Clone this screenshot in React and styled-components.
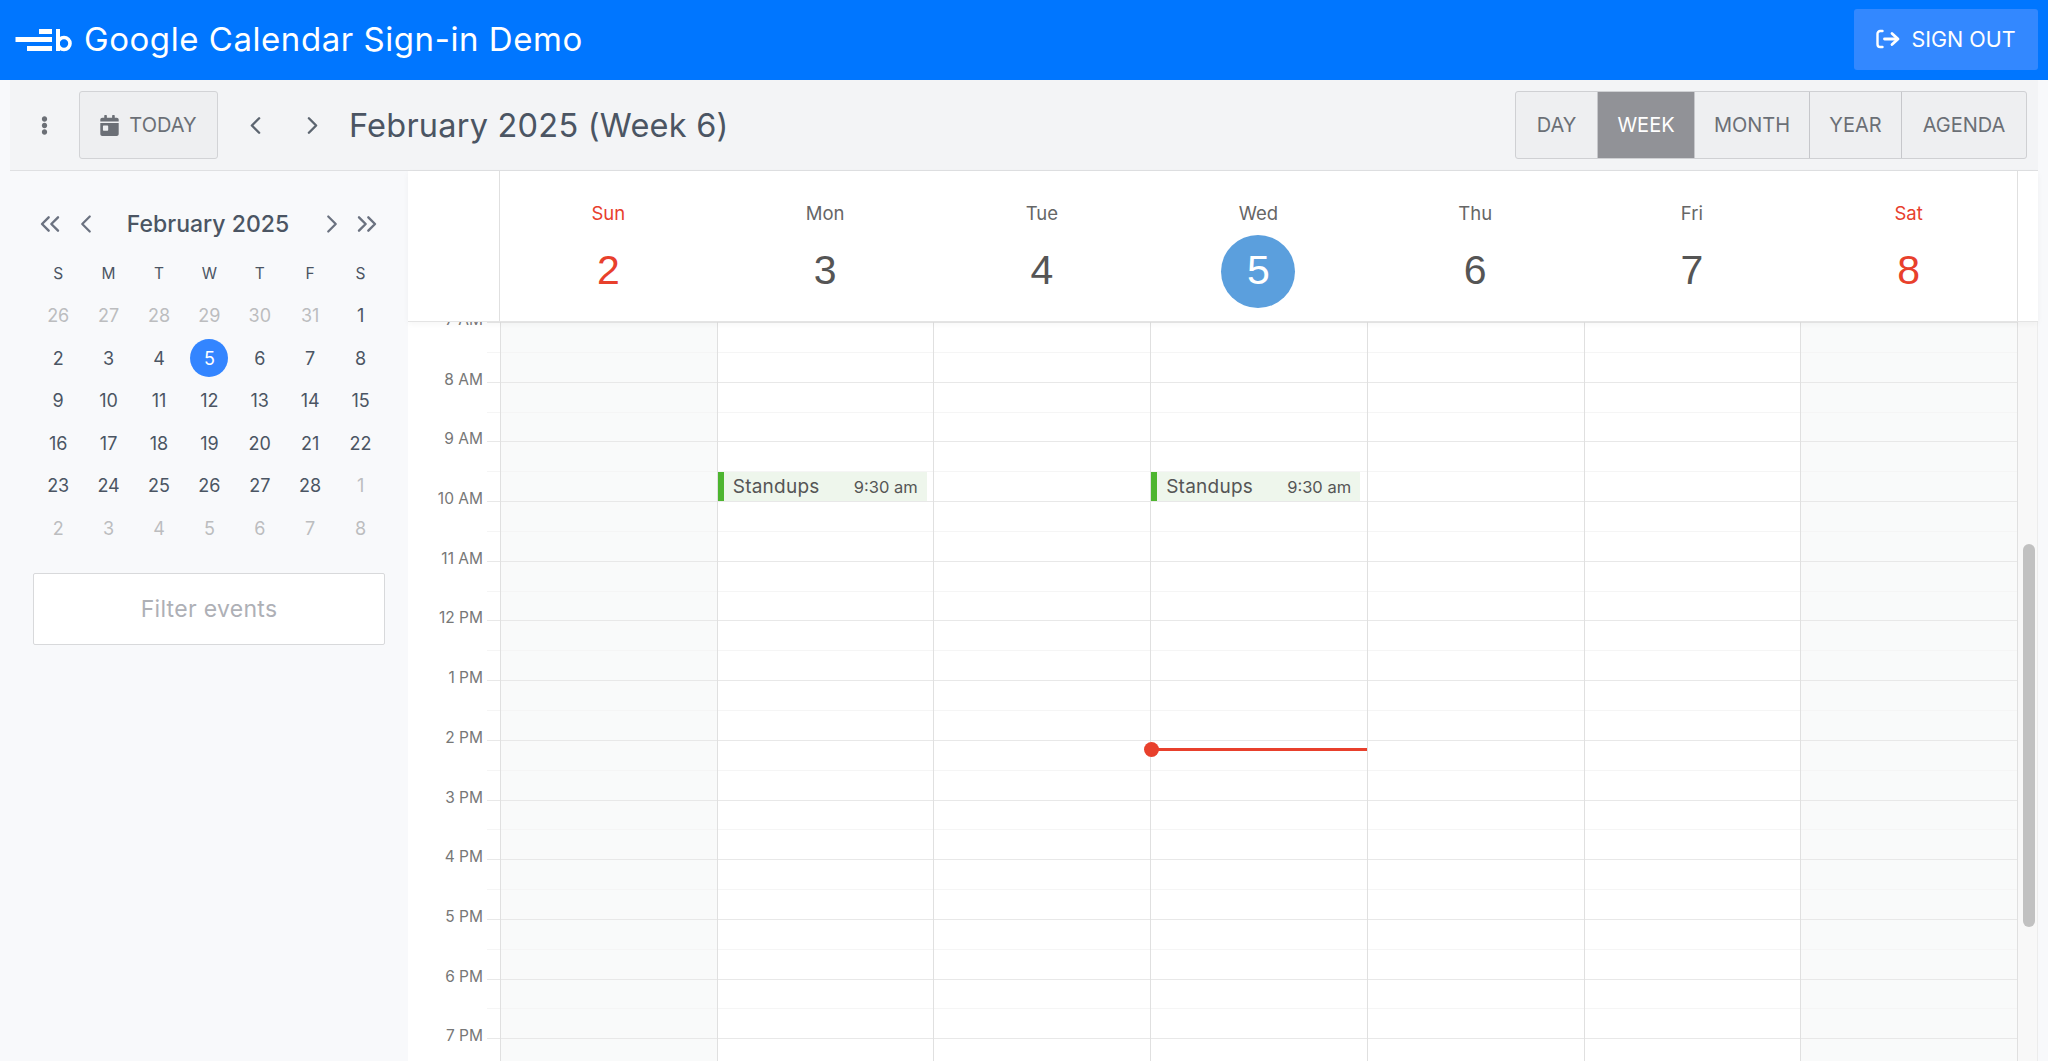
import React from "react";
import styled, { createGlobalStyle } from "styled-components";
import { FaCalendarDay, FaEllipsisV } from "react-icons/fa";
import { ChevronLeft, ChevronRight, ChevronsLeft, ChevronsRight } from "lucide-react";

const Global = createGlobalStyle`
  html, body { margin: 0; padding: 0; background: #f8f9fb; overflow: hidden; }
  * { box-sizing: border-box; }
  body { font-family: Inter, "Noto Sans", sans-serif; }
`;

const Page = styled.div`
  height: 1061px;
  width: 2048px;
  display: flex;
  flex-direction: column;
  overflow: hidden;
`;
const Header = styled.header`
  height: 80px;
  flex: none;
  background: #0076ff;
  display: flex;
  align-items: center;
  justify-content: space-between;
  padding: 0 10px 0 15px;
`;
const Brand = styled.div`
  display: flex;
  align-items: center;
  gap: 11px;
  color: #fff;
  font-size: 33px;
  letter-spacing: 0.55px;
`;
const BrandName = styled.span`
  margin-top: -2px;
`;
const SignOut = styled.button`
  width: 184px;
  height: 61px;
  margin-top: -2px;
  border: 0;
  border-radius: 3px;
  background: #3388ff;
  color: #fff;
  font: 400 21.5px Inter, sans-serif;
  display: flex;
  align-items: center;
  justify-content: center;
  gap: 11px;
  svg { width: 24px; height: 20px; flex: none; }
`;
const Main = styled.div`
  flex: 1;
  min-height: 0;
  margin: 0 10px;
  display: flex;
  flex-direction: column;
`;
const Toolbar = styled.div`
  height: 91px;
  flex: none;
  background: #f3f4f6;
  border-bottom: 1px solid #dfe0e2;
  display: flex;
  align-items: center;
  padding: 0 11px 0 0;
`;
const MenuDots = styled.div`
  width: 69px;
  display: flex;
  justify-content: center;
  color: #6b6f76;
  svg { width: 19px; height: 19px; }
`;
const TodayButton = styled.button`
  width: 139px;
  height: 68px;
  border: 1px solid #d2d3d6;
  border-radius: 3px;
  background: #eeeff1;
  color: #6b6f76;
  font: 400 20px Inter, sans-serif;
  display: flex;
  align-items: center;
  justify-content: center;
  gap: 10px;
  svg { width: 19px; height: 21px; flex: none; }
`;
const NavButton = styled.span`
  width: 57px;
  display: flex;
  justify-content: center;
  color: #5c6570;
  svg { width: 29px; height: 29px; stroke-width: 2; }
`;
const NavGroup = styled.div`
  display: flex;
  margin-left: 9px;
`;
const Title = styled.h1`
  margin: 0 0 0 8px;
  font-size: 32.5px;
  font-weight: 400;
  letter-spacing: 0.22px;
  color: #4b5563;
  flex: 1;
`;
const ViewGroup = styled.div`
  display: flex;
  height: 68px;
  border: 1px solid #cfd0d3;
  border-radius: 3px;
  background: #eeeff1;
`;
const ViewButton = styled.div`
  width: ${(p) => p.$w}px;
  display: flex;
  align-items: center;
  justify-content: center;
  font-size: 20px;
  color: ${(p) => (p.$active ? "#fff" : "#6b6f76")};
  background: ${(p) => (p.$active ? "#919297" : "transparent")};
  border-right: 1px solid #c6c7cb;
  &:last-child { border-right: 0; }
`;
const Body = styled.div`
  flex: 1;
  min-height: 0;
  display: flex;
`;
const Sidebar = styled.aside`
  width: 398px;
  flex: none;
  background: #f8f9fb;
  display: flex;
  flex-direction: column;
  padding: 0 23px;
`;
const MiniHead = styled.div`
  height: 38px;
  margin-top: 34px;
  display: flex;
  align-items: center;
  color: #6b7280;
`;
const MiniNav = styled.span`
  width: ${(p) => p.$w}px;
  flex: none;
  display: flex;
  justify-content: center;
  svg { width: ${(p) => p.$s}px; height: ${(p) => p.$s}px; stroke-width: 1.8; }
`;
const MiniTitle = styled.div`
  flex: 1;
  text-align: center;
  font-size: 23px;
  font-weight: 500;
  color: #4b5563;
  margin-right: 4px;
`;
const MiniGrid = styled.div`
  display: grid;
  grid-template-columns: repeat(7, 50.4px);
  grid-auto-rows: 42.5px;
  margin-top: 9px;
`;
const MiniCell = styled.div`
  display: flex;
  align-items: center;
  justify-content: center;
  font-size: ${(p) => (p.$head ? 15.5 : 18)}px;
  color: ${(p) => (p.$muted ? "#bcbdbf" : "#4b5563")};
`;
const TodayDot = styled.span`
  width: 38px;
  height: 38px;
  border-radius: 50%;
  background: #3385ff;
  color: #fff;
  display: flex;
  align-items: center;
  justify-content: center;
`;
const Filter = styled.div`
  width: 352px;
  height: 72px;
  margin-top: 23px;
  background: #fff;
  border: 1px solid #d8d9db;
  border-radius: 2px;
  display: flex;
  align-items: center;
  justify-content: center;
  font-size: 23px;
  letter-spacing: 0.3px;
  color: #aeb0b6;
`;
const Calendar = styled.div`
  flex: 1;
  min-width: 0;
  background: #fff;
  display: flex;
  flex-direction: column;
`;
const DayHeader = styled.div`
  height: 151px;
  flex: none;
  display: grid;
  grid-template-columns: 92px repeat(7, 1fr) 21px;
  border-bottom: 1px solid #e4e4e4;
  box-shadow: 0 2px 6px rgba(0, 0, 0, 0.04);
  position: relative;
  z-index: 1;
`;
const HeadSpacer = styled.div`
  border-right: 1px solid #e0e0e0;
`;
const HeadEnd = styled.div`
  border-left: 1px solid #e0e0e0;
`;
const HeadDay = styled.div`
  display: flex;
  flex-direction: column;
  align-items: center;
  padding-top: 30px;
`;
const HeadName = styled.div`
  font-size: 18.5px;
  line-height: 24px;
  color: ${(p) => (p.$weekend ? "#e8402c" : "#666")};
`;
const HeadNumber = styled.div`
  width: 74px;
  height: 73px;
  margin-top: 10px;
  padding-bottom: 2px;
  border-radius: 50%;
  display: flex;
  align-items: center;
  justify-content: center;
  font: 400 41px "Liberation Sans", Arial, sans-serif;
  color: ${(p) => (p.$today ? "#fff" : p.$weekend ? "#e8402c" : "#555")};
  background: ${(p) => (p.$today ? "#5b9fdd" : "transparent")};
`;
const TimeGrid = styled.div`
  flex: 1;
  min-height: 0;
  overflow: hidden;
  display: grid;
  grid-template-columns: 92px repeat(7, 1fr) 21px;
`;
const Gutter = styled.div`
  display: flex;
  flex-direction: column;
`;
const GutterSlot = styled.div`
  height: 29.85px;
  flex: none;
  display: grid;
  grid-template-columns: 75px 4px 13px;
`;
const GutterLabel = styled.div`
  font-size: 15.5px;
  line-height: 20px;
  height: 20px;
  margin-top: -12px;
  text-align: right;
  color: #777;
  white-space: nowrap;
`;
const GutterTick = styled.div`
  grid-column: 3;
  border-top: 1px solid ${(p) => (p.$hour ? "#e8e8e8" : "#f5f5f5")};
`;
const DayColumn = styled.div`
  position: relative;
  border-left: 1px solid #e0e0e0;
  background: ${(p) => (p.$weekend ? "#f9fafa" : "#fff")};
  display: flex;
  flex-direction: column;
`;
const Slot = styled.div`
  height: 29.85px;
  flex: none;
  border-top: 1px solid ${(p) => (p.$hour ? "#e8e8e8" : "#f5f5f5")};
`;
const Event = styled.div`
  position: absolute;
  top: 150px;
  left: 0;
  width: 209px;
  height: 29px;
  background: #eef6ec;
  border-left: 6px solid #4db52f;
  display: flex;
  align-items: center;
  justify-content: space-between;
  padding: 0 9px 0 9px;
  color: #555;
`;
const EventName = styled.span`
  font-size: 19px;
  letter-spacing: 0.25px;
`;
const EventTime = styled.span`
  font-size: 16.5px;
`;
const NowLine = styled.div`
  position: absolute;
  top: 426px;
  left: 0;
  right: 0;
  height: 3px;
  background: #e8402c;
`;
const NowDot = styled.div`
  position: absolute;
  left: -7px;
  top: -6px;
  width: 15px;
  height: 15px;
  border-radius: 50%;
  background: #e8402c;
`;
const ScrollTrack = styled.div`
  background: #f8f8f8;
  border-left: 1px solid #e0e0e0;
  border-right: 1px solid #ececec;
  padding: 222px 3px 0 5px;
`;
const ScrollThumb = styled.div`
  height: 383px;
  width: 12px;
  border-radius: 6px;
  background: #c1c1c1;
`;
const LogoMark = styled.svg`
  width: 58px;
  height: 24px;
  display: block;
`;

const days = [
  ["Sun", 2, true], ["Mon", 3], ["Tue", 4], ["Wed", 5, false, true],
  ["Thu", 6], ["Fri", 7], ["Sat", 8, true],
];
const hours = ["7 AM","8 AM","9 AM","10 AM","11 AM","12 PM","1 PM","2 PM","3 PM","4 PM","5 PM","6 PM","7 PM"];
const mini = [
  [26,27,28,29,30,31].map((d) => [d, true]).concat([[1]]),
  [2,3,4,5,6,7,8].map((d) => [d]),
  [9,10,11,12,13,14,15].map((d) => [d]),
  [16,17,18,19,20,21,22].map((d) => [d]),
  [23,24,25,26,27,28].map((d) => [d]).concat([[1, true]]),
  [2,3,4,5,6,7,8].map((d) => [d, true]),
].flat();
const views = [["DAY", 82], ["WEEK", 97, true], ["MONTH", 115], ["YEAR", 92], ["AGENDA", 124]];

const Logo = () => (
  <LogoMark viewBox="0 0 58 24" aria-hidden="true">
    <rect x="24" y="1" width="13" height="5" fill="#fff" />
    <rect x="0.5" y="9" width="36.5" height="5" fill="#fff" />
    <rect x="12" y="18" width="25" height="5" fill="#fff" />
    <rect x="41" y="1" width="4" height="22" fill="#fff" />
    <circle cx="49" cy="15.5" r="6" fill="none" stroke="#fff" strokeWidth="3.6" />
  </LogoMark>
);

const SignOutIcon = () => (
  <svg viewBox="0 0 24 20" fill="none" stroke="#fff" aria-hidden="true">
    <path d="M6.5 2H4.2A2.7 2.7 0 0 0 1.5 4.7v10.6A2.7 2.7 0 0 0 4.2 18h2.3" strokeWidth="2.4" strokeLinecap="round" />
    <path d="M8.5 10H21" strokeWidth="2.8" strokeLinecap="round" />
    <path d="M16 4.5 22 10l-6 5.5" strokeWidth="2.8" strokeLinecap="round" strokeLinejoin="round" />
  </svg>
);

const slots = Array.from({ length: 26 }, (_, i) => i);

export default function App() {
  return (
    <Page>
      <Global />
      <Header>
        <Brand>
          <Logo />
          <BrandName>Google Calendar Sign-in Demo</BrandName>
        </Brand>
        <SignOut>
          <SignOutIcon />
          SIGN OUT
        </SignOut>
      </Header>
      <Main>
        <Toolbar>
          <MenuDots><FaEllipsisV /></MenuDots>
          <TodayButton><FaCalendarDay />TODAY</TodayButton>
          <NavGroup>
            <NavButton><ChevronLeft /></NavButton>
            <NavButton><ChevronRight /></NavButton>
          </NavGroup>
          <Title>February 2025 (Week 6)</Title>
          <ViewGroup>
            {views.map(([label, w, active]) => (
              <ViewButton key={label} $w={w} $active={active}>{label}</ViewButton>
            ))}
          </ViewGroup>
        </Toolbar>
        <Body>
          <Sidebar>
            <MiniHead>
              <MiniNav $w={34} $s={32}><ChevronsLeft /></MiniNav>
              <MiniNav $w={38} $s={30}><ChevronLeft /></MiniNav>
              <MiniTitle>February 2025</MiniTitle>
              <MiniNav $w={34} $s={30}><ChevronRight /></MiniNav>
              <MiniNav $w={36} $s={32}><ChevronsRight /></MiniNav>
            </MiniHead>
            <MiniGrid>
              {["S","M","T","W","T","F","S"].map((d, i) => (
                <MiniCell key={i} $head>{d}</MiniCell>
              ))}
              {mini.map(([d, muted], i) => (
                <MiniCell key={i} $muted={muted}>
                  {d === 5 && !muted ? <TodayDot>5</TodayDot> : d}
                </MiniCell>
              ))}
            </MiniGrid>
            <Filter>Filter events</Filter>
          </Sidebar>
          <Calendar>
            <DayHeader>
              <HeadSpacer />
              {days.map(([name, num, weekend, today]) => (
                <HeadDay key={name}>
                  <HeadName $weekend={weekend}>{name}</HeadName>
                  <HeadNumber $weekend={weekend} $today={today}>{num}</HeadNumber>
                </HeadDay>
              ))}
              <HeadEnd />
            </DayHeader>
            <TimeGrid>
              <Gutter>
                {slots.map((i) => (
                  <GutterSlot key={i}>
                    {i % 2 === 0 && <GutterLabel>{hours[i / 2]}</GutterLabel>}
                    <GutterTick $hour={i % 2 === 0} />
                  </GutterSlot>
                ))}
              </Gutter>
              {days.map(([name, , weekend]) => (
                <DayColumn key={name} $weekend={weekend}>
                  {slots.map((i) => <Slot key={i} $hour={i % 2 === 0} />)}
                  {(name === "Mon" || name === "Wed") && (
                    <Event>
                      <EventName>Standups</EventName>
                      <EventTime>9:30 am</EventTime>
                    </Event>
                  )}
                  {name === "Wed" && <NowLine><NowDot /></NowLine>}
                </DayColumn>
              ))}
              <ScrollTrack><ScrollThumb /></ScrollTrack>
            </TimeGrid>
          </Calendar>
        </Body>
      </Main>
    </Page>
  );
}
